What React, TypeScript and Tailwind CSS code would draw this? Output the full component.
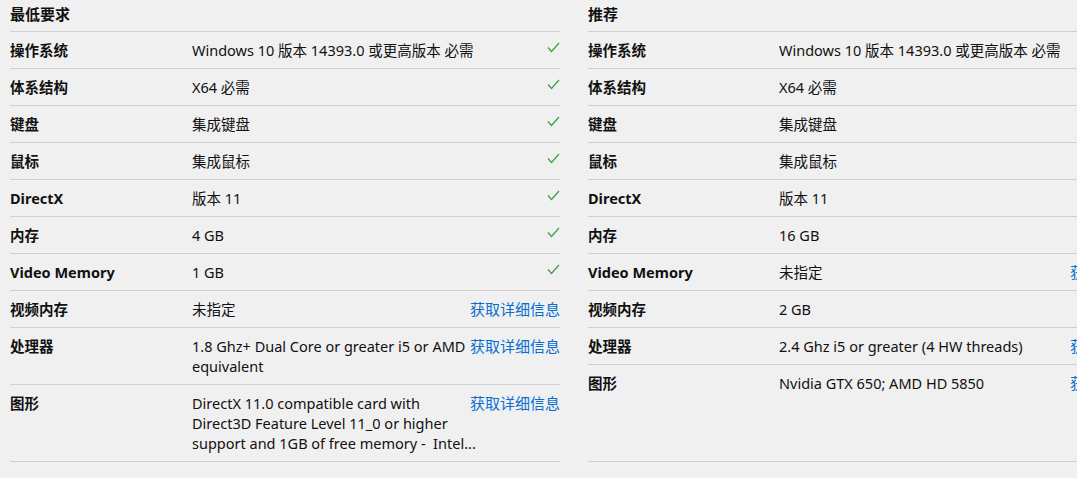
import React from "react";

type Row = { label: string; value: string[]; check?: boolean; link?: boolean };

const minRows: Row[] = [
  { label: "操作系统", value: ["Windows 10 版本 14393.0 或更高版本 必需"], check: true },
  { label: "体系结构", value: ["X64 必需"], check: true },
  { label: "键盘", value: ["集成键盘"], check: true },
  { label: "鼠标", value: ["集成鼠标"], check: true },
  { label: "DirectX", value: ["版本 11"], check: true },
  { label: "内存", value: ["4 GB"], check: true },
  { label: "Video Memory", value: ["1 GB"], check: true },
  { label: "视频内存", value: ["未指定"], link: true },
  { label: "处理器", value: ["1.8 Ghz+ Dual Core or greater i5 or AMD", "equivalent"], link: true },
  {
    label: "图形",
    value: ["DirectX 11.0 compatible card with", "Direct3D Feature Level 11_0 or higher", "support and 1GB of free memory -  Intel..."],
    link: true,
  },
];

const recRows: Row[] = [
  { label: "操作系统", value: ["Windows 10 版本 14393.0 或更高版本 必需"] },
  { label: "体系结构", value: ["X64 必需"] },
  { label: "键盘", value: ["集成键盘"] },
  { label: "鼠标", value: ["集成鼠标"] },
  { label: "DirectX", value: ["版本 11"] },
  { label: "内存", value: ["16 GB"] },
  { label: "Video Memory", value: ["未指定"], link: true },
  { label: "视频内存", value: ["2 GB"] },
  { label: "处理器", value: ["2.4 Ghz i5 or greater (4 HW threads)"], link: true },
  { label: "图形", value: ["Nvidia GTX 650; AMD HD 5850"], link: true },
];

function Check() {
  return (
    <svg width="13" height="11" viewBox="0 0 13 11" className="mt-[2px] ml-auto">
      <polyline points="1,5.5 4.5,9.5 12,1" fill="none" stroke="#3f9f3f" strokeWidth="1.2" />
    </svg>
  );
}

function Column({ title, rows, wide }: { title: string; rows: Row[]; wide?: boolean }) {
  const grid = wide
    ? "grid grid-cols-[191px_291px_95px] items-start py-2 leading-5 border-b border-[#cfcfcf]"
    : "grid grid-cols-[182px_278px_90px] items-start py-2 leading-5 border-b border-[#cfcfcf]";
  return (
    <div className={wide ? "w-[577px] shrink-0 flex flex-col" : "w-[550px] shrink-0 flex flex-col"}>
      <div className="pt-[4px] pb-[7px] font-bold leading-5 text-[15px] border-b border-[#cfcfcf]">{title}</div>
      {rows.map((r, i) => (
        <div key={i} className={i === rows.length - 1 ? grid + " flex-1" : grid}>
          <div className="font-bold">{r.label}</div>
          <div className="whitespace-pre">
            {r.value.map((v, j) => (
              <div key={j}>{v}</div>
            ))}
          </div>
          <div className="flex">
            {r.check && <Check />}
            {r.link && <span className="text-[#0a6ed1] text-[15px] whitespace-nowrap">获取详细信息</span>}
          </div>
        </div>
      ))}
    </div>
  );
}

export default function App() {
  return (
    <div
      className="w-[1077px] h-[478px] overflow-hidden bg-[#f0f0f0] text-[14.5px] text-[#111]"
      style={{ fontFamily: '"Noto Sans", "Noto Sans CJK SC", sans-serif' }}
    >
      <div className="flex items-stretch gap-[28px] pl-[10px]">
        <Column title="最低要求" rows={minRows} />
        <Column title="推荐" rows={recRows} wide />
      </div>
    </div>
  );
}
